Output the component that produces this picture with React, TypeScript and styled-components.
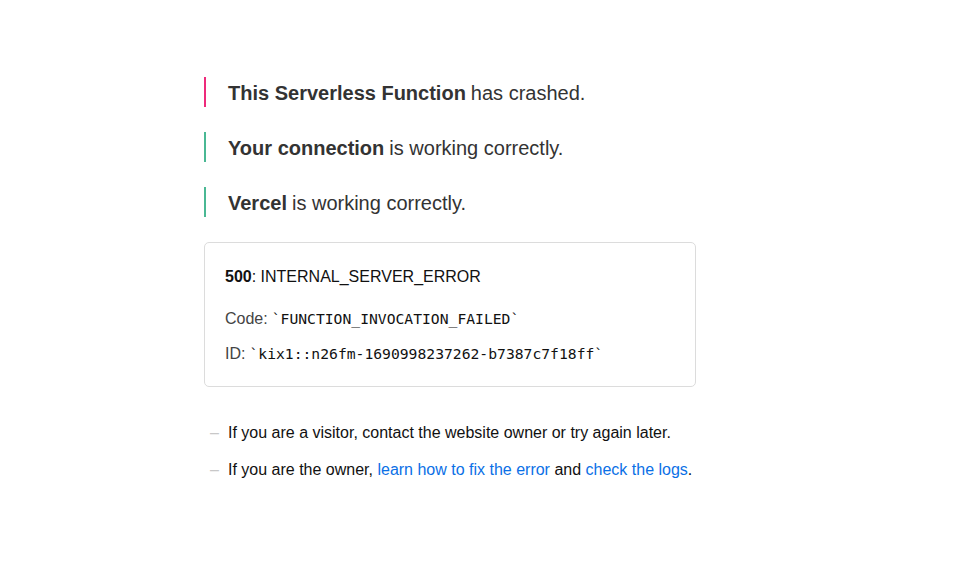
import React from "react";
import styled, { createGlobalStyle } from "styled-components";

const GlobalStyle = createGlobalStyle`
  html, body {
    margin: 0;
    padding: 0;
    background: #fff;
  }
  body {
    font-family: "Liberation Sans", Arial, Helvetica, sans-serif;
    -webkit-font-smoothing: antialiased;
  }
`;

const Page = styled.main`
  width: 561px;
  margin: 0 auto;
  padding-top: 77px;
`;

const Status = styled.p<{ $ok?: boolean }>`
  margin: 0 0 25px;
  height: 30px;
  box-sizing: border-box;
  display: flex;
  align-items: center;
  padding: 2px 0 0 22px;
  border-left: 2px solid ${(p) => (p.$ok ? "#4ab894" : "#ee2a7b")};
  font-size: 20px;
  color: #333;

  b {
    font-weight: 700;
    margin-right: 5px;
  }
`;

const InfoBox = styled.div`
  width: 492px;
  box-sizing: border-box;
  height: 145px;
  border: 1px solid #dcdcdc;
  border-radius: 5px;
  padding: 24px 20px 0;
  color: #111;
`;

const ErrorLine = styled.div`
  font-size: 16px;
  line-height: 20px;
  margin-bottom: 22px;

  b {
    font-weight: 700;
  }
`;

const CodeLine = styled.div`
  font-size: 16px;
  line-height: 20px;
  color: #444;
  margin-bottom: 15px;

  code {
    font-family: "DejaVu Sans Mono", "Liberation Mono", monospace;
    font-size: 14.7px;
    color: #111;
    margin-left: 4px;
  }
`;

const Hints = styled.ul`
  list-style: none;
  margin: 36px 0 0;
  padding: 0;
`;

const Hint = styled.li`
  display: flex;
  font-size: 16px;
  line-height: 20px;
  color: #111;
  margin-bottom: 17px;

  &::before {
    content: "–";
    color: #c8c8c8;
    width: 24px;
    padding-left: 6px;
    box-sizing: border-box;
    flex-shrink: 0;
  }

  span {
    white-space: pre;
  }
`;

const Link = styled.a`
  color: #0b70e6;
  text-decoration: none;
`;

export default function App() {
  return (
    <>
      <GlobalStyle />
      <Page>
        <Status>
          <b>This Serverless Function</b>has crashed.
        </Status>
        <Status $ok>
          <b>Your connection</b>is working correctly.
        </Status>
        <Status $ok>
          <b>Vercel</b>is working correctly.
        </Status>
        <InfoBox>
          <ErrorLine>
            <b>500</b>: INTERNAL_SERVER_ERROR
          </ErrorLine>
          <CodeLine>
            Code:<code>`FUNCTION_INVOCATION_FAILED`</code>
          </CodeLine>
          <CodeLine>
            ID:<code>`kix1::n26fm-1690998237262-b7387c7f18ff`</code>
          </CodeLine>
        </InfoBox>
        <Hints>
          <Hint>
            <span>If you are a visitor, contact the website owner or try again later.</span>
          </Hint>
          <Hint>
            <span>
              If you are the owner, <Link href="#">learn how to fix the error</Link> and{" "}
              <Link href="#">check the logs</Link>.
            </span>
          </Hint>
        </Hints>
      </Page>
    </>
  );
}
